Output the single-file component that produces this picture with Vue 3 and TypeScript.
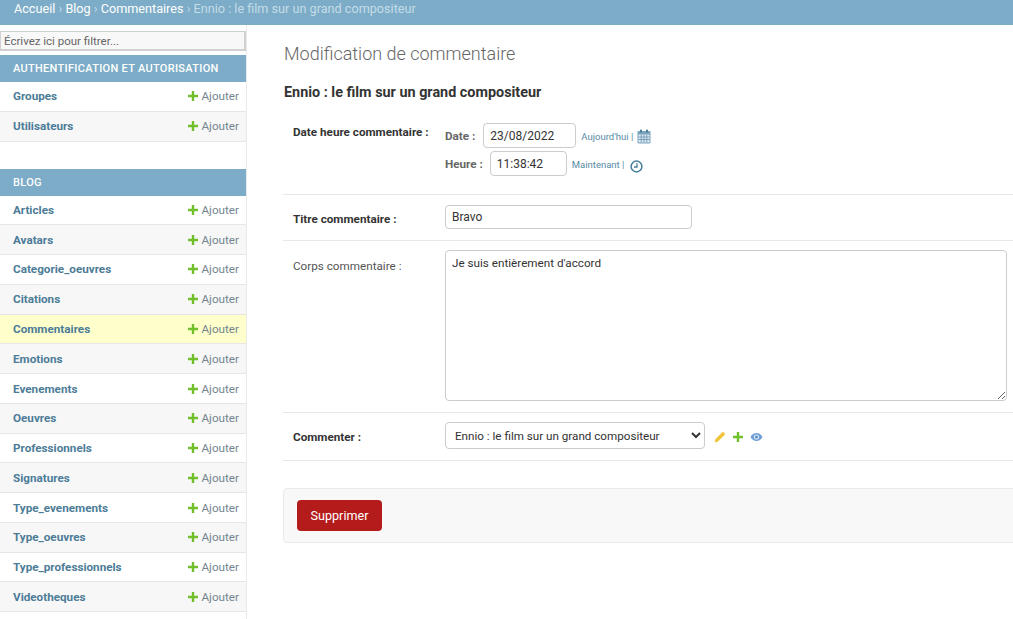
<script setup lang="ts">
const crumbs = ['Accueil', 'Blog', 'Commentaires'];

const authModels = ['Groupes', 'Utilisateurs'];
const blogModels = [
  'Articles',
  'Avatars',
  'Categorie_oeuvres',
  'Citations',
  'Commentaires',
  'Emotions',
  'Evenements',
  'Oeuvres',
  'Professionnels',
  'Signatures',
  'Type_evenements',
  'Type_oeuvres',
  'Type_professionnels',
  'Videotheques',
];

const groups = [
  { name: 'Authentification et Autorisation', models: authModels },
  { name: 'Blog', models: blogModels },
];

const title = 'Ennio : le film sur un grand compositeur';
</script>

<template>
  <div class="page">
    <header class="topbar">
      <template v-for="c in crumbs" :key="c">
        <a class="crumb">{{ c }}</a><span class="sep"> › </span>
      </template>
      <span class="current">{{ title }}</span>
    </header>

    <div class="body">
      <aside class="sidebar">
        <input class="filter" placeholder="Écrivez ici pour filtrer..." />
        <section v-for="g in groups" :key="g.name" class="group">
          <h2 class="caption">{{ g.name }}</h2>
          <div
            v-for="m in g.models"
            :key="m"
            class="model"
            :class="{ active: m === 'Commentaires' }"
          >
            <a class="model-name">{{ m }}</a>
            <a class="add">
              <svg class="plus" viewBox="0 0 12 12" width="12" height="12">
                <path d="M4.8 1h2.4v3.8H11v2.4H7.2V11H4.8V7.2H1V4.8h3.8z" fill="#70bf2b" />
              </svg>
              Ajouter
            </a>
          </div>
        </section>
      </aside>

      <main class="main">
        <h1 class="page-title">Modification de commentaire</h1>
        <h2 class="object-title">{{ title }}</h2>

        <div class="row row-date">
          <label class="label strong">Date heure commentaire :</label>
          <div class="datetime">
            <div class="dt-line">
              <span class="dt-label date-label">Date :</span>
              <input class="text date-input" value="23/08/2022" />
              <span class="shortcut">Aujourd'hui |</span>
              <svg class="cal" viewBox="0 0 14 15" width="14" height="15">
                <rect x="0.5" y="2" width="13" height="12.5" rx="1" fill="#7ba3bd" />
                <rect x="3" y="0.5" width="2" height="3" rx="0.8" fill="#447e9b" />
                <rect x="9" y="0.5" width="2" height="3" rx="0.8" fill="#447e9b" />
                <path d="M1.5 5.5h11v8h-11z" fill="#dfe9f0" />
                <path d="M1.5 8h11M1.5 10.5h11M4.2 5.5v8M7 5.5v8M9.8 5.5v8" stroke="#6f9ab5" stroke-width="0.9" fill="none" />
              </svg>
            </div>
            <div class="dt-line">
              <span class="dt-label">Heure :</span>
              <input class="text time-input" value="11:38:42" />
              <span class="shortcut">Maintenant |</span>
              <svg class="clock" viewBox="0 0 13 13" width="13" height="13">
                <circle cx="6.5" cy="6.5" r="5.4" fill="none" stroke="#447e9b" stroke-width="1.5" />
                <path d="M7 3.2v3.8H4" fill="none" stroke="#447e9b" stroke-width="1.3" />
              </svg>
            </div>
          </div>
        </div>

        <div class="row row-title">
          <label class="label strong title-label">Titre commentaire :</label>
          <input class="text title-input" value="Bravo" />
        </div>

        <div class="row row-body">
          <label class="label">Corps commentaire :</label>
          <textarea class="text body-input">Je suis entièrement d'accord</textarea>
        </div>

        <div class="row row-select">
          <label class="label strong">Commenter :</label>
          <select class="text select">
            <option>{{ title }}</option>
          </select>
          <div class="related">
            <svg viewBox="0 0 12 12" width="12" height="12">
              <path d="M.5 11.5l1-3.5L8 1.5a1.4 1.4 0 0 1 2 0l.5.5a1.4 1.4 0 0 1 0 2L4 10.5z" fill="#f0c53c" />
            </svg>
            <svg viewBox="0 0 12 12" width="12" height="12">
              <path d="M4.8 1h2.4v3.8H11v2.4H7.2V11H4.8V7.2H1V4.800h3.800z" fill="#70bf2b" />
            </svg>
            <svg viewBox="0 0 13 10" width="13" height="10">
              <path d="M.5 5C2 2.2 4 1 6.5 1S11 2.2 12.5 5C11 7.8 9 9 6.5 9S2 7.8.5 5z" fill="#6f9fd8" />
              <circle cx="6.5" cy="5" r="2.6" fill="#dbe8f6" />
              <circle cx="6.5" cy="5" r="1.5" fill="#5a8cc8" />
            </svg>
          </div>
        </div>

        <div class="submit-row">
          <a class="delete">Supprimer</a>
        </div>
      </main>
    </div>
  </div>
</template>

<style>
html,
body {
  margin: 0;
  height: 100%;
  overflow: hidden;
  background: #fff;
}
</style>

<style scoped>
.page {
  height: 619px;
  overflow: hidden;
  font-family: Roboto, "Liberation Sans", sans-serif;
  font-size: 14px;
  color: #333;
}

.topbar {
  box-sizing: border-box;
  height: 25px;
  padding: 0 14px;
  background: #7cacc7;
  color: #c4dce8;
  font-size: 12.65px;
  line-height: 17px;
  white-space: nowrap;
}

.crumb {
  color: #fff;
}

.sep {
  color: #c4dce8;
}

.body {
  display: flex;
  height: 594px;
}

.sidebar {
  box-sizing: border-box;
  flex: 0 0 247px;
  height: 594px;
  border-right: 1px solid #eaeaea;
  overflow: hidden;
}

.filter {
  display: block;
  box-sizing: border-box;
  width: 246px;
  height: 20px;
  margin: 6px 0 4px;
  padding: 0 3px;
  border: 1px solid #d0d0d0;
  border-width: 1px 2px 2px 1px;
  background: #f8f8f8;
  font-family: inherit;
  font-size: 11.5px;
  color: #333;
  outline: none;
}

.filter::placeholder {
  color: #666;
  opacity: 1;
}

.group {
  margin-bottom: 27px;
}

.caption {
  box-sizing: border-box;
  height: 27px;
  margin: 0;
  padding: 0 13px;
  background: #7cacc7;
  color: #fff;
  font-size: 11px;
  font-weight: 500;
  letter-spacing: 0.3px;
  line-height: 27px;
  text-transform: uppercase;
}

.model {
  box-sizing: border-box;
  display: flex;
  align-items: center;
  justify-content: space-between;
  height: 29.77px;
  padding: 0 7px 0 13px;
  border-bottom: 1px solid #e6e6e6;
  background: #fff;
  font-size: 11.7px;
}

.model:nth-child(odd) {
  background: #f7f7f7;
}

.model.active {
  background: #ffffcc;
}

.model-name {
  color: #4c7c97;
  font-weight: 700;
}

.add {
  display: flex;
  align-items: center;
  gap: 2px;
  color: #75858f;
}

.main {
  flex: 1;
  min-width: 0;
  padding-left: 36px;
  overflow: hidden;
}

.page-title {
  margin: 18px 0 0 1px;
  color: #666;
  font-size: 18px;
  font-weight: 300;
  line-height: 21px;
}

.object-title {
  margin: 20px 0 0 1px;
  color: #333;
  font-size: 14.4px;
  font-weight: 700;
  line-height: 17px;
}

.row {
  box-sizing: border-box;
  display: flex;
  align-items: flex-start;
  width: 760px;
  padding-left: 10px;
  border-bottom: 1px solid #e8e8e8;
  font-size: 11.7px;
}

.label {
  flex: 0 0 152px;
  color: #333;
}

.strong {
  font-weight: 700;
}

.text {
  box-sizing: border-box;
  border: 1px solid #ccc;
  border-radius: 4px;
  background: #fff;
  color: #333;
  font-family: inherit;
  font-size: 12px;
  outline: none;
}

.row-date {
  height: 86px;
  margin-top: 8px;
  padding-top: 14px;
}

.row-date .label {
  padding-top: 2px;
  line-height: 14px;
}

.datetime {
  display: flex;
  flex-direction: column;
  gap: 3px;
}

.dt-line {
  display: flex;
  align-items: center;
  height: 25px;
}

.dt-label {
  margin-right: 7px;
  color: #666;
  font-weight: 700;
}

.date-label {
  margin-right: 8px;
}

.date-input {
  width: 93px;
  height: 25px;
  padding: 0 6px;
}

.time-input {
  width: 77px;
  height: 25px;
  padding: 0 6px;
}

.shortcut {
  margin-left: 5px;
  margin-top: 2px;
  color: #447e9b;
  font-size: 9.5px;
  opacity: 0.9;
}

.cal {
  margin-left: 4px;
  margin-top: 2px;
}

.clock {
  margin-left: 6px;
  margin-top: 5px;
}

.row-title {
  height: 46px;
  padding-top: 10px;
}

.title-label {
  padding-top: 7px;
}

.title-input {
  width: 247px;
  height: 24px;
  padding: 0 6px;
}

.row-body {
  height: 172px;
  padding-top: 9px;
}

.row-body .label {
  color: #555;
  padding-top: 9px;
  line-height: 14px;
}

.body-input {
  display: block;
  width: 562px;
  height: 151px;
  padding: 5px 6px;
  font-size: 11.7px;
  resize: both;
  line-height: 15px;
}

.row-select {
  height: 48px;
  padding-top: 9px;
}

.row-select .label {
  padding-top: 8px;
}

.select {
  width: 260px;
  height: 27px;
  padding: 0 5px;
  font-size: 11.65px;
}

.related {
  display: flex;
  align-items: center;
  gap: 6px;
  height: 27px;
  margin-left: 9px;
  padding-top: 3px;
  box-sizing: border-box;
}

.submit-row {
  box-sizing: border-box;
  width: 760px;
  height: 55px;
  margin-top: 27px;
  padding: 11px 13px;
  border: 1px solid #eaeaea;
  border-radius: 4px;
  background: #f8f8f8;
}

.delete {
  display: block;
  width: 85px;
  height: 31px;
  border-radius: 4px;
  background: #b41c1c;
  color: #fff;
  font-size: 12.6px;
  line-height: 31px;
  text-align: center;
}
</style>
